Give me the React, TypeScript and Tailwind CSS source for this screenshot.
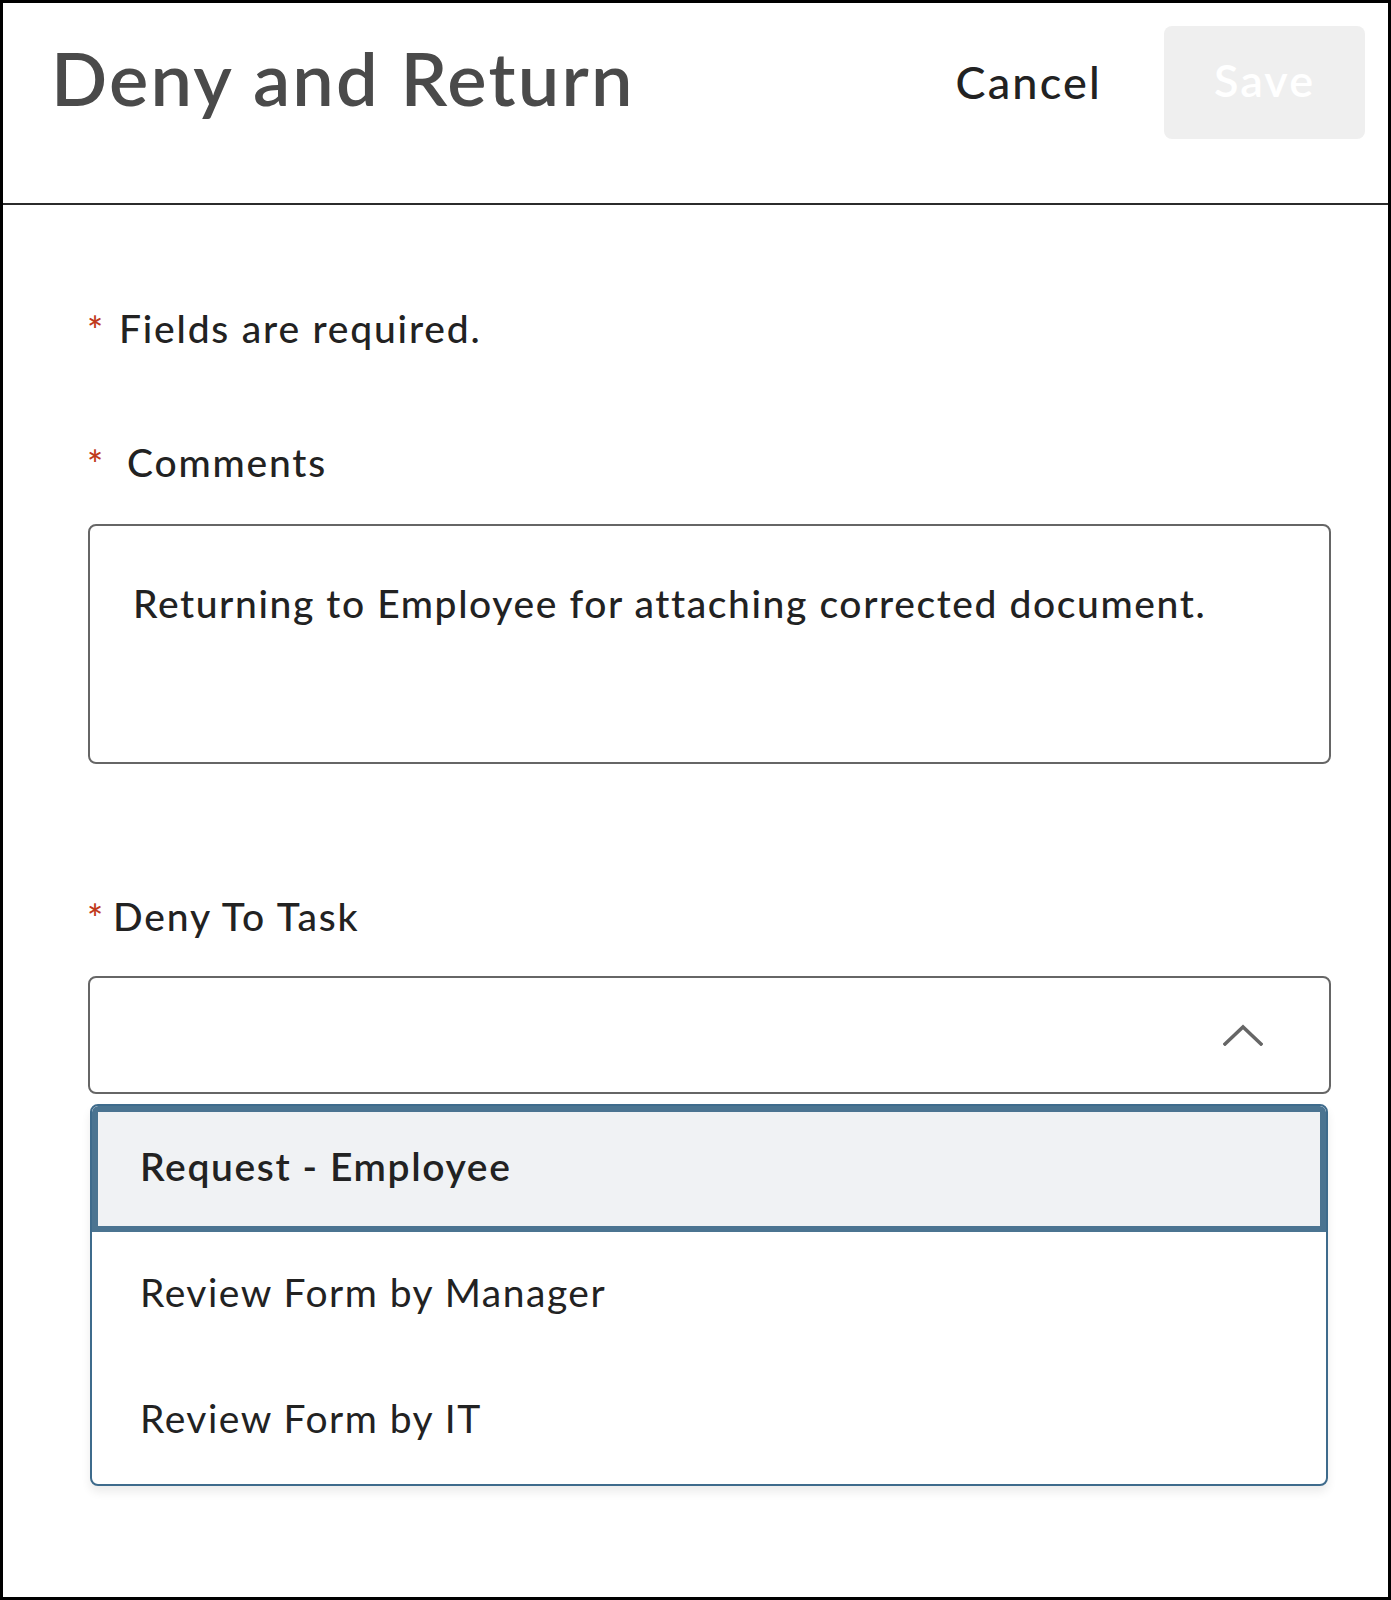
import React from "react";

function Req({ w }: { w: string }) {
  return (
    <span className={`${w} shrink-0 text-[38px] leading-none text-[#c0391b] pt-[2px] -ml-[1px]`}>*</span>
  );
}

export default function App() {
  return (
    <div
      className="w-[1391px] h-[1600px] border-[3px] border-black bg-white flex flex-col"
      style={{ fontFamily: "Lato, 'Open Sans', sans-serif" }}
    >
      <header className="h-[202px] shrink-0 border-b-2 border-[#2b2b2b] flex items-start">
        <h1 className="mt-[38px] pl-[48px] text-[74px] leading-none font-semibold tracking-[2.2px] text-[#4a4a4a]">
          Deny and Return
        </h1>
        <div className="ml-auto flex items-center gap-[62px] mt-[23px] mr-[23px]">
          <button className="text-[45px] leading-none font-medium tracking-[2.2px] text-[#222]">Cancel</button>
          <button className="w-[201px] h-[113px] rounded-[8px] bg-[#efefef] text-[45px] leading-none font-semibold tracking-[2px] text-white pb-[4px]">
            Save
          </button>
        </div>
      </header>

      <main className="pl-[85px] flex flex-col">
        <div className="mt-[104px] flex items-start text-[39px] leading-none tracking-[1.8px] text-[#222] font-medium">
          <Req w="w-[32px]" />
          <span>Fields are required.</span>
        </div>

        <div className="mt-[94px] flex items-start text-[39px] leading-none tracking-[1.8px] text-[#222] font-medium">
          <Req w="w-[40px]" />
          <span>Comments</span>
        </div>

        <div className="mt-[41px] w-[1243px] h-[240px] border-2 border-[#666] rounded-[8px] pt-[58px] pl-[43px] text-[39px] leading-none tracking-[1.6px] text-[#222] font-medium">
          Returning to Employee for attaching corrected document.
        </div>

        <div className="mt-[133px] flex items-start text-[39px] leading-none tracking-[1.9px] text-[#222] font-medium">
          <Req w="w-[26px]" />
          <span>Deny To Task</span>
        </div>

        <div className="mt-[39px] w-[1243px] h-[118px] border-2 border-[#666] rounded-[8px] flex items-center justify-end pr-[66px]">
          <svg width="40" height="22" viewBox="0 0 40 22" fill="none">
            <path d="M2 20 L20 3 L38 20" stroke="#666" strokeWidth="3.5" strokeLinecap="square" />
          </svg>
        </div>

        <div className="mt-[10px] ml-[2px] w-[1238px] border-2 border-[#3e6b8c] rounded-[8px] overflow-hidden shadow-[0_6px_10px_rgba(0,0,0,0.08)] bg-white">
          <div className="h-[126px] border-[6px] border-[#4b7491] bg-[#f0f2f4] rounded-t-[6px] flex items-center pl-[42px] pb-[6px] text-[39px] leading-none tracking-[1.6px] font-semibold text-[#222]">
            Request - Employee
          </div>
          <div className="h-[126px] flex items-center pl-[48px] pb-[6px] text-[39px] leading-none tracking-[1.5px] text-[#222]">
            Review Form by Manager
          </div>
          <div className="h-[126px] flex items-center pl-[48px] pb-[6px] text-[39px] leading-none tracking-[1.5px] text-[#222]">
            Review Form by IT
          </div>
        </div>
      </main>
    </div>
  );
}
